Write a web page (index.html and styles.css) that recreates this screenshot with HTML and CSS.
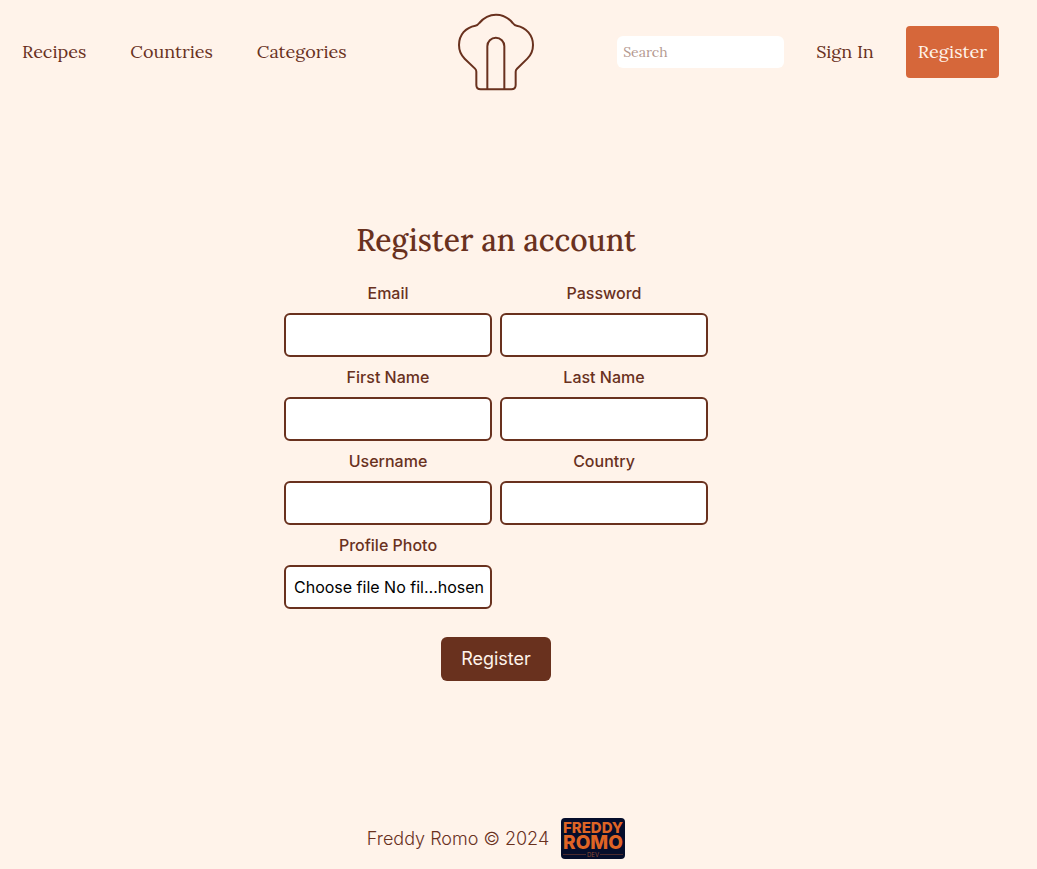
FILE: index.html
```html
<!DOCTYPE html>
<html lang="en">
<head>
<meta charset="utf-8">
<meta name="viewport" content="width=device-width, initial-scale=1">
<title>Register an account</title>
<link rel="stylesheet" href="styles.css">
</head>
<body>
<header class="header">
  <nav class="nav" aria-label="Browse">
    <a href="#recipes">Recipes</a>
    <a href="#countries">Countries</a>
    <a href="#categories">Categories</a>
  </nav>
  <a class="logo" href="#home" aria-label="Home">
    <svg width="76" height="78" viewBox="54 39 228 234" fill="none" stroke="currentColor" stroke-width="6" stroke-linejoin="round">
      <path d="M122 268Q109 268 109 255V215Q109 210 105 206L74 176C62 164 57 149 57 135C57 105 77 82 106 77Q113 76 118 69C132 52 149 44 168 44C187 44 204 52 218 69Q223 76 230 77C259 82 279 107 279 135C279 150 272 166 262 176L231 206Q227 210 227 215V255Q227 268 214 268Z"/>
      <path d="M142 268V139a25.500 25.500 0 0 1 51 0V268"/>
    </svg>
  </a>
  <div class="account">
    <input class="search" type="search" placeholder="Search" aria-label="Search">
    <a href="#signin">Sign In</a>
    <a class="register-link" href="#register">Register</a>
  </div>
</header>
<main class="main">
  <h1 class="title">Register an account</h1>
  <form class="form">
    <div class="fields">
      <div class="field"><label for="email">Email</label><input id="email" type="email"></div>
      <div class="field"><label for="password">Password</label><input id="password" type="password"></div>
      <div class="field"><label for="first">First Name</label><input id="first" type="text"></div>
      <div class="field"><label for="last">Last Name</label><input id="last" type="text"></div>
      <div class="field"><label for="username">Username</label><input id="username" type="text"></div>
      <div class="field"><label for="country">Country</label><input id="country" type="text"></div>
      <div class="field">
        <label for="photo">Profile Photo</label>
        <label class="file">Choose file No fil…hosen<input class="file-input" id="photo" type="file"></label>
      </div>
    </div>
    <button class="submit" type="submit">Register</button>
  </form>
</main>
<footer class="footer">
  <span>Freddy Romo © 2024</span>
  <a class="dev" href="#dev" aria-label="Freddy Romo Dev">
    <svg width="64" height="41" viewBox="0 0 64 41">
      <rect width="64" height="41" rx="4" fill="#050d2b"/>
      <g class="dev-name" fill="#df6425" text-anchor="middle">
        <text x="32" y="15" font-size="15">FREDDY</text>
        <text x="32" y="31" font-size="19">ROMO</text>
      </g>
      <path d="M2 36.500H25M39 36.500H62" stroke="#4b2a2f"/>
      <text class="dev-tag" x="32" y="39" font-size="6" fill="#8c4a34" text-anchor="middle">DEV</text>
    </svg>
  </a>
</footer>
</body>
</html>
```
FILE: styles.css
```css
:root {
  --brown: #69311e;
  --cream: #fff3ea;
  --orange: #d6673a;
  --serif: Lora, "Liberation Serif", serif;
  --sans: Inter, "Liberation Sans", sans-serif;
}

* { box-sizing: border-box; }

body {
  display: flex;
  flex-direction: column;
  min-height: 100vh;
  margin: 0;
  padding-right: 45px;
  background: var(--cream);
  color: var(--brown);
  font: 16px/24px var(--sans);
}

a { color: inherit; text-decoration: none; }

.header {
  display: grid;
  grid-template-columns: 1fr auto 1fr;
  align-items: center;
  padding: 13px 22px;
  font: 18px/28px var(--serif);
}

.nav { display: flex; gap: 44px; }

.logo { display: flex; }

.account {
  display: flex;
  align-items: center;
  justify-content: flex-end;
  gap: 32px;
  margin-right: -29px;
  white-space: nowrap;
}

.search {
  width: 167px;
  height: 32px;
  padding: 0 6px;
  border: 0;
  border-radius: 6px;
  background: #fff;
  color: var(--brown);
  font: 14px/24px var(--serif);
}

.search::placeholder { color: #b4988f; opacity: 1; }

.register-link {
  padding: 12px;
  border-radius: 4px;
  background: var(--orange);
  color: var(--cream);
}

.main {
  display: flex;
  flex: 1;
  flex-direction: column;
  align-items: center;
  padding-top: 116px;
}

.title {
  margin: 0 0 21px;
  font: 500 30px/40px var(--serif);
}

.form {
  display: flex;
  flex-direction: column;
  align-items: center;
  gap: 28px;
}

.fields {
  display: grid;
  grid-template-columns: repeat(2, 208px);
  gap: 8px;
}

.field {
  display: flex;
  flex-direction: column;
  gap: 8px;
  font-weight: 500;
  text-align: center;
}

.field input:not(.file-input),
.file {
  width: 100%;
  height: 44px;
  padding: 8px;
  border: 2px solid var(--brown);
  border-radius: 6px;
  background: #fff;
  font: 16px/24px var(--sans);
}

.file {
  overflow: hidden;
  color: #000;
  text-align: left;
  white-space: nowrap;
}

.file-input {
  position: absolute;
  width: 1px;
  height: 1px;
  opacity: 0;
}

.submit {
  padding: 8px 20px;
  border: 0;
  border-radius: 6px;
  background: var(--brown);
  color: var(--cream);
  font: 18px/28px var(--sans);
}

.footer {
  display: flex;
  align-items: center;
  justify-content: center;
  gap: 12px;
  padding-bottom: 10px;
  font-size: 18px;
  font-weight: 300;
}

.dev { display: flex; }
.dev-name { font-family: var(--sans); font-weight: 800; }
.dev-tag { font-family: var(--sans); font-weight: 400; }
```
